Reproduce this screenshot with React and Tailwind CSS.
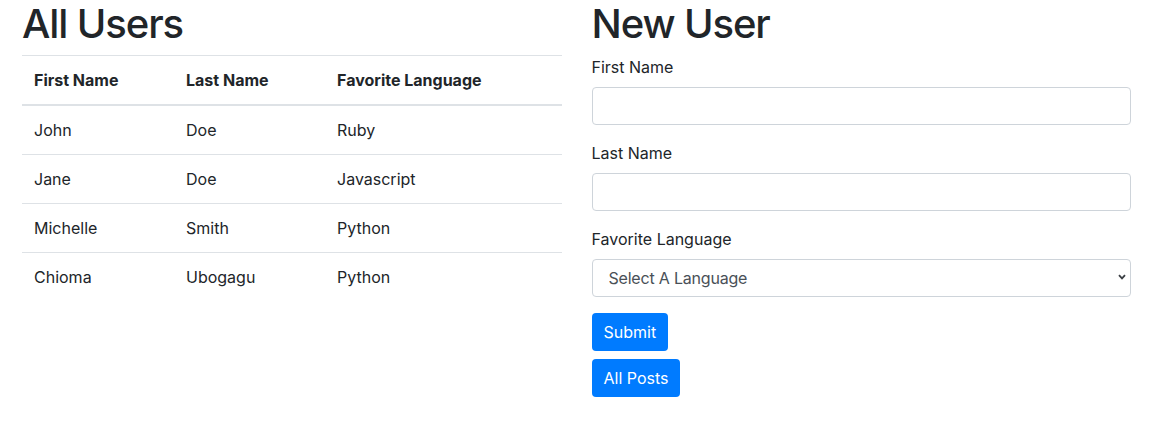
const users = [
  { first: "John", last: "Doe", lang: "Ruby" },
  { first: "Jane", last: "Doe", lang: "Javascript" },
  { first: "Michelle", last: "Smith", lang: "Python" },
  { first: "Chioma", last: "Ubogagu", lang: "Python" },
];

const App = () => {
  return (
    <div
      className="min-h-screen bg-white text-[16px] leading-6 text-[#212529]"
      style={{ fontFamily: "Inter, 'Noto Sans', sans-serif" }}
    >
      <div className="flex gap-[30px] px-[22px]">
        {/* Users table */}
        <div className="w-[540px]">
          <h1 className="mb-[7px] text-[40px] font-medium leading-[48px] tracking-[-1.1px]">All Users</h1>
          <table className="w-full border-collapse text-left">
            <thead>
              <tr>
                <th className="w-[152px] border-t border-b-2 border-[#dee2e6] p-3 font-bold">First Name</th>
                <th className="w-[151px] border-t border-b-2 border-[#dee2e6] p-3 font-bold">Last Name</th>
                <th className="border-t border-b-2 border-[#dee2e6] p-3 font-bold">Favorite Language</th>
              </tr>
            </thead>
            <tbody>
              {users.map((u, i) => (
                <tr key={u.first} className={i > 0 ? "border-t border-[#dee2e6]" : ""}>
                  <td className="p-3">{u.first}</td>
                  <td className="p-3">{u.last}</td>
                  <td className="p-3">{u.lang}</td>
                </tr>
              ))}
            </tbody>
          </table>
        </div>

        {/* New user form */}
        <div className="w-[540px]">
          <h1 className="mb-[7px] text-[40px] font-medium leading-[48px] tracking-[-1.1px]">New User</h1>
          <div className="mb-4">
            <label className="mb-2 block">First Name</label>
            <input className="block h-[38px] w-full rounded border border-[#ced4da] px-3 text-[#495057]" />
          </div>
          <div className="mb-4">
            <label className="mb-2 block">Last Name</label>
            <input className="block h-[38px] w-full rounded border border-[#ced4da] px-3 text-[#495057]" />
          </div>
          <div className="mb-4">
            <label className="mb-2 block">Favorite Language</label>
            <div className="relative">
              <select className="block h-[38px] w-full appearance-none rounded border border-[#ced4da] bg-white pl-4 pr-8 tracking-[-0.2px] text-[#495057]">
                <option>Select A Language</option>
                <option>Ruby</option>
                <option>Javascript</option>
                <option>Python</option>
              </select>
              <svg
                className="pointer-events-none absolute right-[5px] top-[15px]"
                width="8"
                height="6"
                viewBox="0 0 8 6"
              >
                <path d="M1 1.2 L4 4.4 L7 1.2" fill="none" stroke="#3b3f44" strokeWidth="1.8" />
              </svg>
            </div>
          </div>
          <div className="flex flex-col items-start gap-2">
            <button className="h-[38px] rounded bg-[#007bff] px-3 text-white">Submit</button>
            <button className="h-[38px] rounded bg-[#007bff] px-3 text-white">All Posts</button>
          </div>
        </div>
      </div>
    </div>
  );
};

export default App;
